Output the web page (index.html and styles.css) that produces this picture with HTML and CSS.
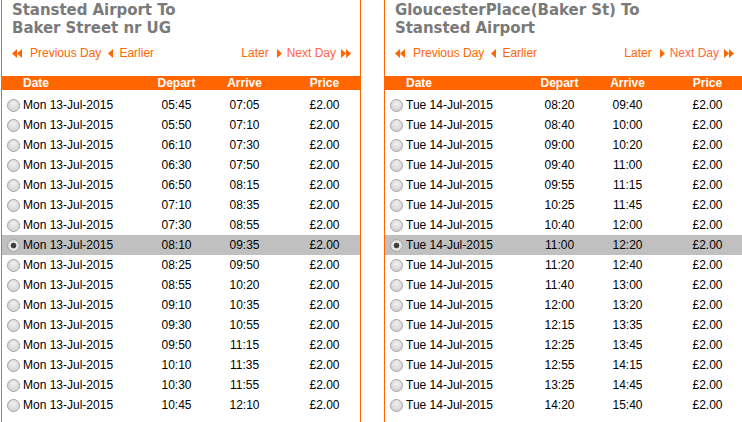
FILE: index.html
```html
<!DOCTYPE html>
<html>
<head>
<meta charset="utf-8">
<link rel="stylesheet" href="styles.css">
</head>
<body>
<div class="page">
  <section class="panel">
    <h2 class="title">Stansted Airport To<br>Baker Street nr UG</h2>
    <div class="nav">
      <div class="nav-group">
        <svg class="tri2" width="10" height="9" viewBox="0 0 10 9"><path d="M5 0 L0 4.5 L5 9 Z M10 0 L5 4.5 L10 9 Z" fill="#ff6600"/></svg>
        <a class="link gap-r7">Previous Day</a>
        <svg class="tri1" width="5" height="9" viewBox="0 0 5 9"><path d="M5 0 L0 4.5 L5 9 Z" fill="#ff6600"/></svg>
        <a class="link">Earlier</a>
      </div>
      <div class="nav-group">
        <a class="link gap-r8">Later</a>
        <svg class="tri1r" width="5" height="9" viewBox="0 0 5 9"><path d="M0 0 L5 4.5 L0 9 Z" fill="#ff6600"/></svg>
        <a class="link next">Next Day</a>
        <svg class="tri2r" width="10" height="9" viewBox="0 0 10 9"><path d="M0 0 L5 4.5 L0 9 Z M5 0 L10 4.5 L5 9 Z" fill="#ff6600"/></svg>
      </div>
    </div>
    <table class="times">
      <thead>
        <tr><th class="c-date">Date</th><th class="c-dep">Depart</th><th class="c-arr">Arrive</th><th class="c-price">Price</th></tr>
      </thead>
      <tbody>
        <tr><td class="c-date"><input type="radio" name="out" class="radio">Mon 13-Jul-2015</td><td class="c-dep">05:45</td><td class="c-arr">07:05</td><td class="c-price">£2.00</td></tr>
        <tr><td class="c-date"><input type="radio" name="out" class="radio">Mon 13-Jul-2015</td><td class="c-dep">05:50</td><td class="c-arr">07:10</td><td class="c-price">£2.00</td></tr>
        <tr><td class="c-date"><input type="radio" name="out" class="radio">Mon 13-Jul-2015</td><td class="c-dep">06:10</td><td class="c-arr">07:30</td><td class="c-price">£2.00</td></tr>
        <tr><td class="c-date"><input type="radio" name="out" class="radio">Mon 13-Jul-2015</td><td class="c-dep">06:30</td><td class="c-arr">07:50</td><td class="c-price">£2.00</td></tr>
        <tr><td class="c-date"><input type="radio" name="out" class="radio">Mon 13-Jul-2015</td><td class="c-dep">06:50</td><td class="c-arr">08:15</td><td class="c-price">£2.00</td></tr>
        <tr><td class="c-date"><input type="radio" name="out" class="radio">Mon 13-Jul-2015</td><td class="c-dep">07:10</td><td class="c-arr">08:35</td><td class="c-price">£2.00</td></tr>
        <tr><td class="c-date"><input type="radio" name="out" class="radio">Mon 13-Jul-2015</td><td class="c-dep">07:30</td><td class="c-arr">08:55</td><td class="c-price">£2.00</td></tr>
        <tr class="selected"><td class="c-date"><input type="radio" name="out" class="radio" checked>Mon 13-Jul-2015</td><td class="c-dep">08:10</td><td class="c-arr">09:35</td><td class="c-price">£2.00</td></tr>
        <tr><td class="c-date"><input type="radio" name="out" class="radio">Mon 13-Jul-2015</td><td class="c-dep">08:25</td><td class="c-arr">09:50</td><td class="c-price">£2.00</td></tr>
        <tr><td class="c-date"><input type="radio" name="out" class="radio">Mon 13-Jul-2015</td><td class="c-dep">08:55</td><td class="c-arr">10:20</td><td class="c-price">£2.00</td></tr>
        <tr><td class="c-date"><input type="radio" name="out" class="radio">Mon 13-Jul-2015</td><td class="c-dep">09:10</td><td class="c-arr">10:35</td><td class="c-price">£2.00</td></tr>
        <tr><td class="c-date"><input type="radio" name="out" class="radio">Mon 13-Jul-2015</td><td class="c-dep">09:30</td><td class="c-arr">10:55</td><td class="c-price">£2.00</td></tr>
        <tr><td class="c-date"><input type="radio" name="out" class="radio">Mon 13-Jul-2015</td><td class="c-dep">09:50</td><td class="c-arr">11:15</td><td class="c-price">£2.00</td></tr>
        <tr><td class="c-date"><input type="radio" name="out" class="radio">Mon 13-Jul-2015</td><td class="c-dep">10:10</td><td class="c-arr">11:35</td><td class="c-price">£2.00</td></tr>
        <tr><td class="c-date"><input type="radio" name="out" class="radio">Mon 13-Jul-2015</td><td class="c-dep">10:30</td><td class="c-arr">11:55</td><td class="c-price">£2.00</td></tr>
        <tr><td class="c-date"><input type="radio" name="out" class="radio">Mon 13-Jul-2015</td><td class="c-dep">10:45</td><td class="c-arr">12:10</td><td class="c-price">£2.00</td></tr>
      </tbody>
    </table>
  </section>

  <section class="panel">
    <h2 class="title">GloucesterPlace(Baker St) To<br>Stansted Airport</h2>
    <div class="nav">
      <div class="nav-group">
        <svg class="tri2" width="10" height="9" viewBox="0 0 10 9"><path d="M5 0 L0 4.5 L5 9 Z M10 0 L5 4.5 L10 9 Z" fill="#ff6600"/></svg>
        <a class="link gap-r7">Previous Day</a>
        <svg class="tri1" width="5" height="9" viewBox="0 0 5 9"><path d="M5 0 L0 4.5 L5 9 Z" fill="#ff6600"/></svg>
        <a class="link">Earlier</a>
      </div>
      <div class="nav-group">
        <a class="link gap-r8">Later</a>
        <svg class="tri1r" width="5" height="9" viewBox="0 0 5 9"><path d="M0 0 L5 4.5 L0 9 Z" fill="#ff6600"/></svg>
        <a class="link next">Next Day</a>
        <svg class="tri2r" width="10" height="9" viewBox="0 0 10 9"><path d="M0 0 L5 4.5 L0 9 Z M5 0 L10 4.5 L5 9 Z" fill="#ff6600"/></svg>
      </div>
    </div>
    <table class="times">
      <thead>
        <tr><th class="c-date">Date</th><th class="c-dep">Depart</th><th class="c-arr">Arrive</th><th class="c-price">Price</th></tr>
      </thead>
      <tbody>
        <tr><td class="c-date"><input type="radio" name="ret" class="radio">Tue 14-Jul-2015</td><td class="c-dep">08:20</td><td class="c-arr">09:40</td><td class="c-price">£2.00</td></tr>
        <tr><td class="c-date"><input type="radio" name="ret" class="radio">Tue 14-Jul-2015</td><td class="c-dep">08:40</td><td class="c-arr">10:00</td><td class="c-price">£2.00</td></tr>
        <tr><td class="c-date"><input type="radio" name="ret" class="radio">Tue 14-Jul-2015</td><td class="c-dep">09:00</td><td class="c-arr">10:20</td><td class="c-price">£2.00</td></tr>
        <tr><td class="c-date"><input type="radio" name="ret" class="radio">Tue 14-Jul-2015</td><td class="c-dep">09:40</td><td class="c-arr">11:00</td><td class="c-price">£2.00</td></tr>
        <tr><td class="c-date"><input type="radio" name="ret" class="radio">Tue 14-Jul-2015</td><td class="c-dep">09:55</td><td class="c-arr">11:15</td><td class="c-price">£2.00</td></tr>
        <tr><td class="c-date"><input type="radio" name="ret" class="radio">Tue 14-Jul-2015</td><td class="c-dep">10:25</td><td class="c-arr">11:45</td><td class="c-price">£2.00</td></tr>
        <tr><td class="c-date"><input type="radio" name="ret" class="radio">Tue 14-Jul-2015</td><td class="c-dep">10:40</td><td class="c-arr">12:00</td><td class="c-price">£2.00</td></tr>
        <tr class="selected"><td class="c-date"><input type="radio" name="ret" class="radio" checked>Tue 14-Jul-2015</td><td class="c-dep">11:00</td><td class="c-arr">12:20</td><td class="c-price">£2.00</td></tr>
        <tr><td class="c-date"><input type="radio" name="ret" class="radio">Tue 14-Jul-2015</td><td class="c-dep">11:20</td><td class="c-arr">12:40</td><td class="c-price">£2.00</td></tr>
        <tr><td class="c-date"><input type="radio" name="ret" class="radio">Tue 14-Jul-2015</td><td class="c-dep">11:40</td><td class="c-arr">13:00</td><td class="c-price">£2.00</td></tr>
        <tr><td class="c-date"><input type="radio" name="ret" class="radio">Tue 14-Jul-2015</td><td class="c-dep">12:00</td><td class="c-arr">13:20</td><td class="c-price">£2.00</td></tr>
        <tr><td class="c-date"><input type="radio" name="ret" class="radio">Tue 14-Jul-2015</td><td class="c-dep">12:15</td><td class="c-arr">13:35</td><td class="c-price">£2.00</td></tr>
        <tr><td class="c-date"><input type="radio" name="ret" class="radio">Tue 14-Jul-2015</td><td class="c-dep">12:25</td><td class="c-arr">13:45</td><td class="c-price">£2.00</td></tr>
        <tr><td class="c-date"><input type="radio" name="ret" class="radio">Tue 14-Jul-2015</td><td class="c-dep">12:55</td><td class="c-arr">14:15</td><td class="c-price">£2.00</td></tr>
        <tr><td class="c-date"><input type="radio" name="ret" class="radio">Tue 14-Jul-2015</td><td class="c-dep">13:25</td><td class="c-arr">14:45</td><td class="c-price">£2.00</td></tr>
        <tr><td class="c-date"><input type="radio" name="ret" class="radio">Tue 14-Jul-2015</td><td class="c-dep">14:20</td><td class="c-arr">15:40</td><td class="c-price">£2.00</td></tr>
      </tbody>
    </table>
  </section>
</div>
</body>
</html>
```

FILE: styles.css
```css
html, body {
  margin: 0;
  padding: 0;
  background: #ffffff;
  overflow: hidden;
}

.page {
  display: flex;
  gap: 23px;
  padding-left: 1px;
  height: 422px;
  font-family: "Liberation Sans", Arial, sans-serif;
  font-size: 12px;
}

.panel {
  flex: 0 0 360px;
  width: 360px;
  box-sizing: border-box;
  border-left: 1px solid #ff6600;
  border-right: 1px solid #ff6600;
  padding-top: 1px;
}

.title {
  margin: 0;
  padding-left: 10px;
  font-family: "DejaVu Sans", Verdana, sans-serif;
  font-weight: bold;
  font-size: 15px;
  line-height: 18px;
  color: #7a7a7a;
  letter-spacing: -0.05px;
}

.nav {
  display: flex;
  justify-content: space-between;
  align-items: center;
  margin-top: 9px;
  height: 14px;
  padding: 0 9px 0 10px;
  line-height: 14px;
}

.nav-group {
  display: flex;
  align-items: center;
}

.link {
  color: #ff6600;
  text-decoration: none;
  cursor: pointer;
}

.link.next {
  color: #ff6644;
  margin: 0 5px;
}

.tri2 { margin-right: 8px; }
.tri1 { margin-right: 6px; }
.gap-r7 { margin-right: 7px; }
.gap-r8 { margin-right: 8px; }

.times {
  margin-top: 16px;
  width: 358px;
  border-collapse: collapse;
  table-layout: fixed;
}

.times thead tr {
  background: #ff6600;
}

.times th {
  color: #ffffff;
  font-weight: bold;
  height: 14px;
  line-height: 14px;
  padding: 0;
  text-align: center;
}

.times tbody::before {
  content: "";
  display: table-row;
  height: 5px;
}

.times td {
  height: 20px;
  line-height: 20px;
  padding: 0;
  text-align: center;
  color: #000000;
  white-space: nowrap;
}

.times .c-date {
  width: 140px;
  text-align: left;
}

.times th.c-date {
  padding-left: 21px;
  box-sizing: border-box;
}

.times td.c-date {
  display: flex;
  align-items: center;
  height: 20px;
}

.times .c-dep { width: 69px; }
.times .c-arr { width: 67px; }
.times .c-price { width: 82px; padding-left: 11px; box-sizing: border-box; }

.times tr.selected td {
  background: #c0c0c0;
}

.radio {
  -webkit-appearance: none;
  appearance: none;
  width: 13px;
  height: 13px;
  margin: 0 3px 0 5px;
  border-radius: 50%;
  border: 1px solid #a4a4a4;
  background: radial-gradient(circle at 50% 35%, #f0f0f0 0%, #dcdcdc 55%, #cdcdcd 100%);
  box-sizing: border-box;
  flex: 0 0 13px;
}

.radio:checked {
  background: radial-gradient(circle at 50% 50%, #3c3c3c 0, #3c3c3c 2px, #5a5a5a 2.6px, #e6e6e6 3.2px, #d6d6d6 100%);
}
```
